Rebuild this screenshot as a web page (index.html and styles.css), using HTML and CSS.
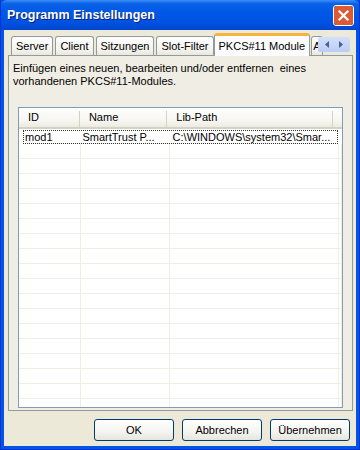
FILE: index.html
```html
<!DOCTYPE html>
<html lang="de">
<head>
    <meta charset="UTF-8">
    <title>Programm Einstellungen</title>
    <link rel="stylesheet" href="styles.css">
</head>
<body>
    <div class="window">
        <div class="titlebar">
            <span class="title">Programm Einstellungen</span>
            <div class="close" title="Schließen">
                <svg width="19" height="19" viewBox="0 0 19 19">
                    <rect x="0" y="0" width="19" height="19" rx="2" fill="#de5a33"/>
                    <path d="M5.5 5.5 L13.5 13.5 M13.5 5.5 L5.5 13.5" stroke="#fff" stroke-width="2.2" stroke-linecap="square"/>
                </svg>
            </div>
        </div>
        <div class="client">
            <div class="tabs">
                <div class="tab">Server</div>
                <div class="tab">Client</div>
                <div class="tab">Sitzungen</div>
                <div class="tab">Slot-Filter</div>
                <div class="tab active">PKCS#11 Module</div>
                <div class="tab cut">A</div>
                <div class="spin">
                    <svg width="32" height="15" viewBox="0 0 32 15">
                        <path d="M11 4 L7 7.5 L11 11 Z" fill="#4d6185"/>
                        <path d="M21 4 L25 7.5 L21 11 Z" fill="#4d6185"/>
                    </svg>
                </div>
            </div>
            <div class="panel">
                <p class="desc">Einfügen eines neuen, bearbeiten und/oder entfernen &nbsp;eines vorhandenen PKCS#11-Modules.</p>
                <div class="list">
                    <div class="row head">
                        <div class="c1">ID</div>
                        <div class="c2">Name</div>
                        <div class="c3">Lib-Path</div>
                        <div class="c4"></div>
                    </div>
                    <div class="row item focus">
                        <div class="c1">mod1</div>
                        <div class="c2">SmartTrust P...</div>
                        <div class="c3">C:\WINDOWS\system32\Smar...</div>
                        <div class="c4"></div>
                    </div>
                    <div id="rows"></div>
                </div>
            </div>
            <div class="buttons">
                <button class="btn">OK</button>
                <button class="btn">Abbrechen</button>
                <button class="btn">Übernehmen</button>
            </div>
        </div>
    </div>

    <script>
        // leere Zeilen für das Gitter
        var html = '';
        for (var i = 0; i < 19; i++) {
            html += '<div class="row item"><div class="c1"></div><div class="c2"></div><div class="c3"></div><div class="c4"></div></div>';
        }
        document.getElementById('rows').innerHTML = html;
    </script>
</body>
</html>
```

FILE: styles.css
```css
body {
    margin: 0;
    font-family: "Liberation Sans", Arial, sans-serif;
    font-size: 11px;
    color: #000;
}
.window {
    width: 360px;
    height: 450px;
    box-sizing: border-box;
    background: #0055e5;
    border: 1px solid #0831d9;
    border-top: none;
    display: flex;
    flex-direction: column;
    overflow: hidden;
}
.titlebar {
    height: 30px;
    flex: none;
    margin: 0 -1px;
    padding: 0 6px 0 7px;
    display: flex;
    align-items: center;
    justify-content: space-between;
    background: linear-gradient(#3d8ff7 0%, #0a62e8 12%, #0058e6 40%, #0054e3 70%, #0046cf 100%);
    border-radius: 7px 7px 0 0;
}
.title {
    color: #fff;
    font-family: "Liberation Sans", Arial, sans-serif;
    font-weight: bold;
    font-size: 12.5px;
    text-shadow: 1px 1px 0 #0a1e6e;
}
.close {
    width: 19px;
    height: 19px;
    border: 1px solid #fff;
    border-radius: 3px;
    overflow: hidden;
    margin-top: 1px;
}
.close svg {
    display: block;
}
.client {
    flex: 1;
    margin: 0 3px 3px 3px;
    background: #ece9d8;
    display: flex;
    flex-direction: column;
    padding: 4px 3px 0 4px;
}
.tabs {
    display: flex;
    align-items: flex-end;
    height: 21px;
    padding-left: 3px;
    position: relative;
}
.tab {
    height: 18px;
    padding: 0 4px;
    margin-right: 2px;
    line-height: 18px;
    border: 1px solid #919b9c;
    border-bottom: none;
    border-radius: 3px 3px 0 0;
    background: linear-gradient(#fefefe, #f4f3ee 70%, #e9e7dd);
    white-space: nowrap;
}
.tab.active {
    height: 20px;
    line-height: 21px;
    margin: 0 -1px 0 -2px;
    padding: 0 4px;
    background: #fcfcfe;
    border-top: 3px solid #f9b43d;
    position: relative;
    top: 1px;
    z-index: 2;
}
.tab.cut {
    width: 9px;
    padding: 0 0 0 1px;
    margin-left: 2px;
}
.spin {
    position: absolute;
    left: 310px;
    top: 3px;
    width: 32px;
    height: 15px;
    background: linear-gradient(#d3e0fb, #b9cdf7);
    border-radius: 2px;
}
.panel {
    height: 356px;
    border: 1px solid #919b9c;
    background: #f0eee4;
    padding: 6px 9px 0 4px;
    box-sizing: border-box;
}
.desc {
    margin: 0 0 19px 0;
    line-height: 13px;
    padding-right: 20px;
}
.list {
    height: 299px;
    margin-left: 5px;
    border: 1px solid #7f9db9;
    background: #fff;
    overflow: hidden;
}
.row {
    display: flex;
}
.row > div {
    box-sizing: border-box;
    white-space: nowrap;
    overflow: hidden;
}
.c1 { width: 62px; }
.c2 { width: 89px; }
.c3 { width: 169px; }
.c4 { flex: 1; }
.head {
    height: 19px;
    background: linear-gradient(#fff, #f6f5f0 70%, #ebeae3);
    border-bottom: 2px solid #d6d2c2;
}
.head > div {
    padding-left: 9px;
    border-right: 1px solid #d6d2c2;
    margin: 3px 0 0 0;
    line-height: 13px;
}
.head .c4 { border-right: none; }
.item {
    height: 15px;
    border-bottom: 1px solid #f0efe6;
    box-sizing: border-box;
}
.item > div {
    border-right: 1px solid #f0efe6;
    line-height: 14px;
    padding-left: 2px;
}
.focus {
    margin: 1px 4px 0 4px;
    outline: 1px dotted #333;
    outline-offset: -1px;
    height: 14px;
}
.focus > div { border-right: none; }
.focus .c1 { width: 58px; padding-left: 2px; }
.focus .c3 { padding-left: 4px; }
.buttons {
    display: flex;
    justify-content: flex-end;
    gap: 8px;
    padding: 8px 3px 0 0;
}
.btn {
    width: 80px;
    height: 22px;
    font-family: "Liberation Sans", Arial, sans-serif;
    font-size: 11px;
    color: #000;
    border: 1px solid #003c74;
    border-radius: 3px;
    background: linear-gradient(#ffffff, #f4f4f0 60%, #e6e5dd);
    padding: 0;
}
```
